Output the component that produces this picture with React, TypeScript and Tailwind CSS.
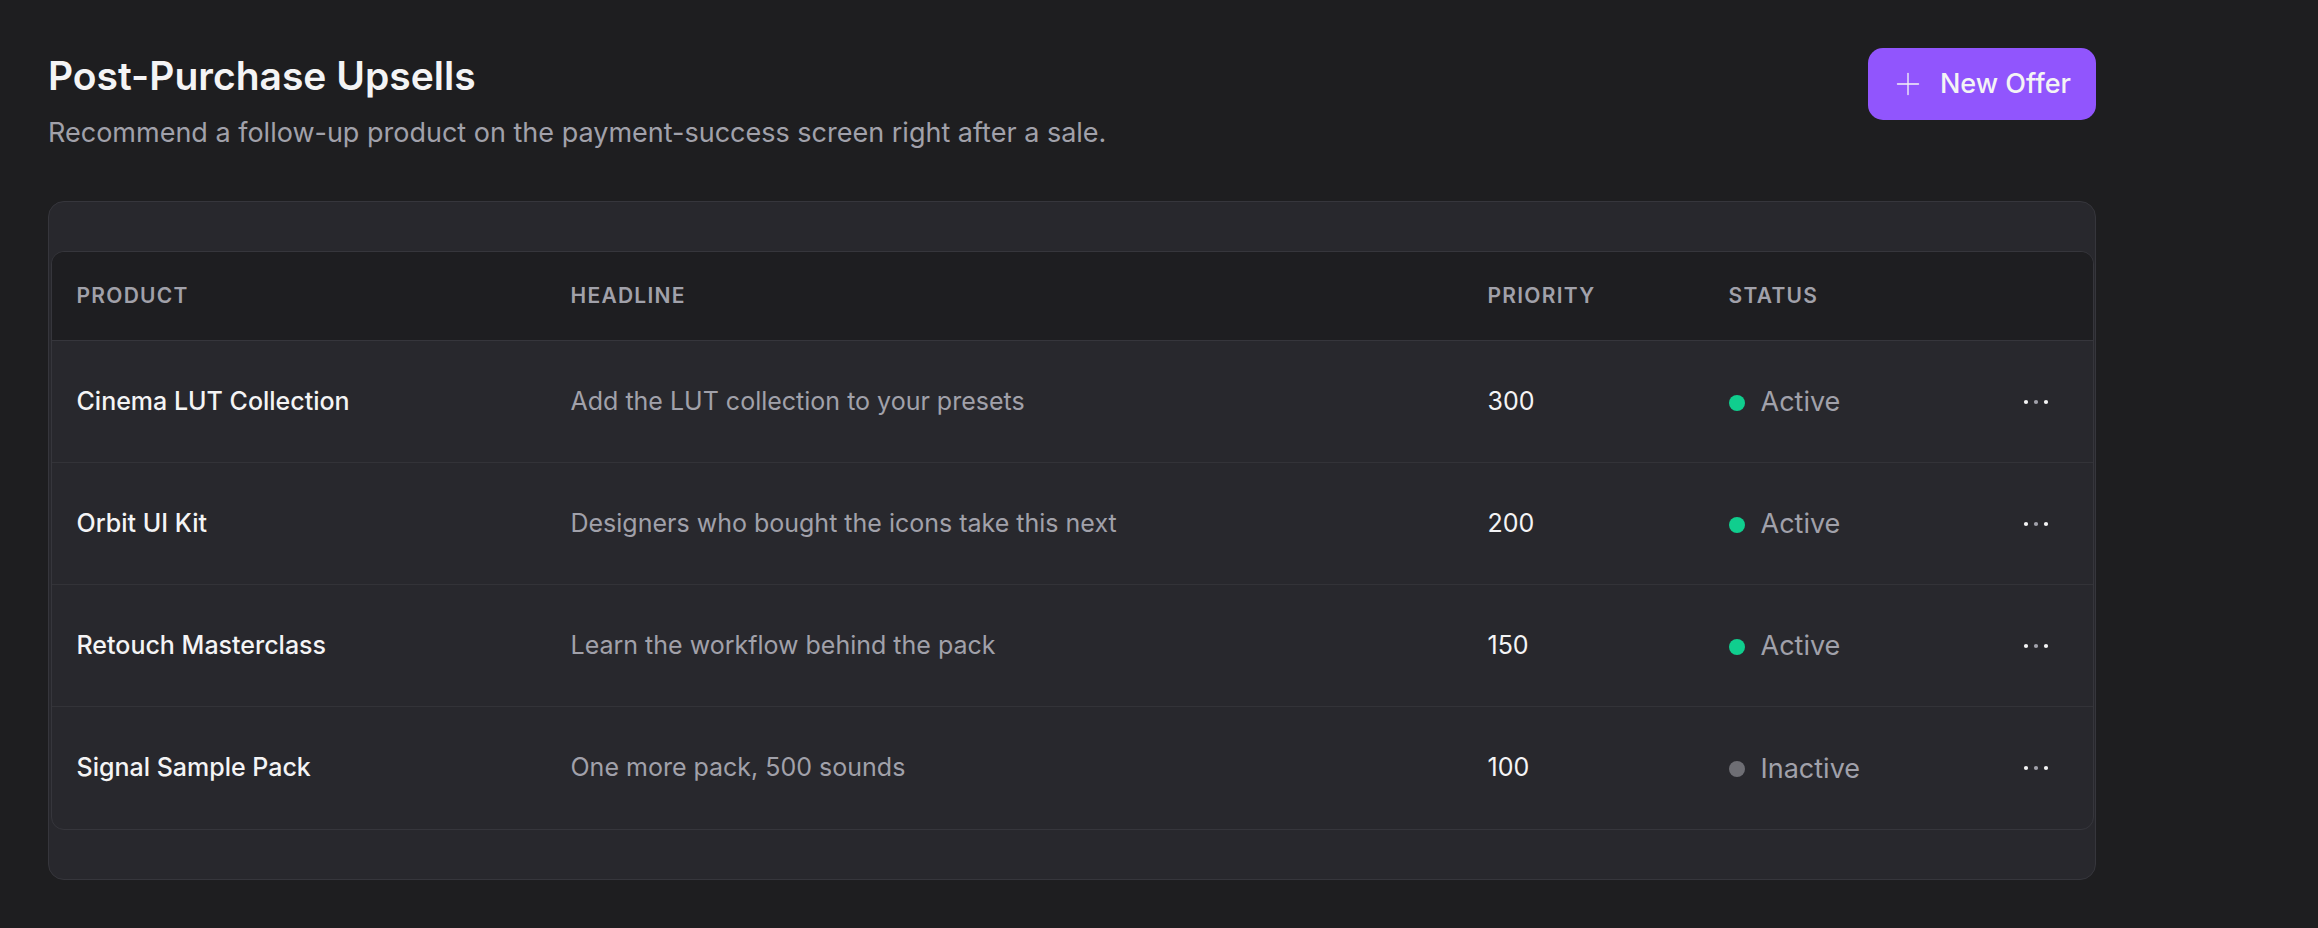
import React from "react";
import { Plus } from "lucide-react";

type Row = { product: string; headline: string; priority: number; active: boolean };

const rows: Row[] = [
  { product: "Cinema LUT Collection", headline: "Add the LUT collection to your presets", priority: 300, active: true },
  { product: "Orbit UI Kit", headline: "Designers who bought the icons take this next", priority: 200, active: true },
  { product: "Retouch Masterclass", headline: "Learn the workflow behind the pack", priority: 150, active: true },
  { product: "Signal Sample Pack", headline: "One more pack, 500 sounds", priority: 100, active: false },
];

function Dots() {
  return (
    <svg width="36" height="12" viewBox="0 0 36 12" aria-hidden="true">
      <circle cx="8" cy="6" r="2.1" fill="#f4f4f5" />
      <circle cx="18" cy="6" r="2.1" fill="#a1a1aa" />
      <circle cx="28" cy="6" r="2.1" fill="#f4f4f5" />
    </svg>
  );
}

const grid = "grid grid-cols-[494px_917px_241px_1fr_100px] items-center";

export default function App() {
  return (
    <div
      className="min-h-[928px] w-full bg-[#1e1e20] pt-[48px] pl-[48px]"
      style={{ fontFamily: "Inter, 'Noto Sans', sans-serif" }}
    >
      <div className="w-[2048px]">
        <div className="flex items-start justify-between">
          <div>
            <h1 className="text-[39px] leading-[56px] font-semibold text-[#f4f4f5]">
              Post-Purchase Upsells
            </h1>
            <p className="mt-[9px] text-[27px] leading-[40px] text-[#a1a1aa]">
              Recommend a follow-up product on the payment-success screen right after a sale.
            </p>
          </div>
          <button className="flex h-[72px] items-center gap-[14px] rounded-[15px] bg-[#9155fd] pl-[22px] pr-[25px] text-[27px] font-medium text-[#f4f4f5]">
            <Plus size={36} strokeWidth={0.9} />
            <span>New Offer</span>
          </button>
        </div>

        <div className="mt-[48px] rounded-[16px] border-[1.5px] border-[#36363c] bg-[#28282d] px-[1.5px] py-[49px]">
          <div className="overflow-hidden rounded-[13px] border-[1.5px] border-[#36363c]">
            <div className={`${grid} h-[89px] border-b-[1.5px] border-[#36363c] bg-[#1e1e21] text-[21px] font-semibold uppercase tracking-[0.06em] text-[#a1a1aa]`}>
              <div className="pl-[25px]">Product</div>
              <div className="pl-[25px]">Headline</div>
              <div className="pl-[25px]">Priority</div>
              <div className="pl-[25px]">Status</div>
              <div />
            </div>
            {rows.map((r, i) => (
              <div
                key={r.product}
                className={`${grid} h-[122px] text-[25px] ${i < rows.length - 1 ? "border-b-[1.5px] border-[#333338]" : ""}`}
              >
                <div className="pl-[25px] font-medium text-[#f4f4f5]">{r.product}</div>
                <div className="pl-[25px] text-[#a1a1aa]">{r.headline}</div>
                <div className="pl-[25px] text-[#f4f4f5]">{r.priority}</div>
                <div className="flex items-center gap-[16px] pl-[25px] pt-[2px]">
                  <span className={`h-[16px] w-[16px] rounded-full ${r.active ? "bg-[#10ce8e]" : "bg-[#6e6e74]"}`} />
                  <span className="text-[27px] text-[#a1a1aa]">{r.active ? "Active" : "Inactive"}</span>
                </div>
                <div className="flex justify-end pr-[39px]">
                  <Dots />
                </div>
              </div>
            ))}
          </div>
        </div>
      </div>
    </div>
  );
}
